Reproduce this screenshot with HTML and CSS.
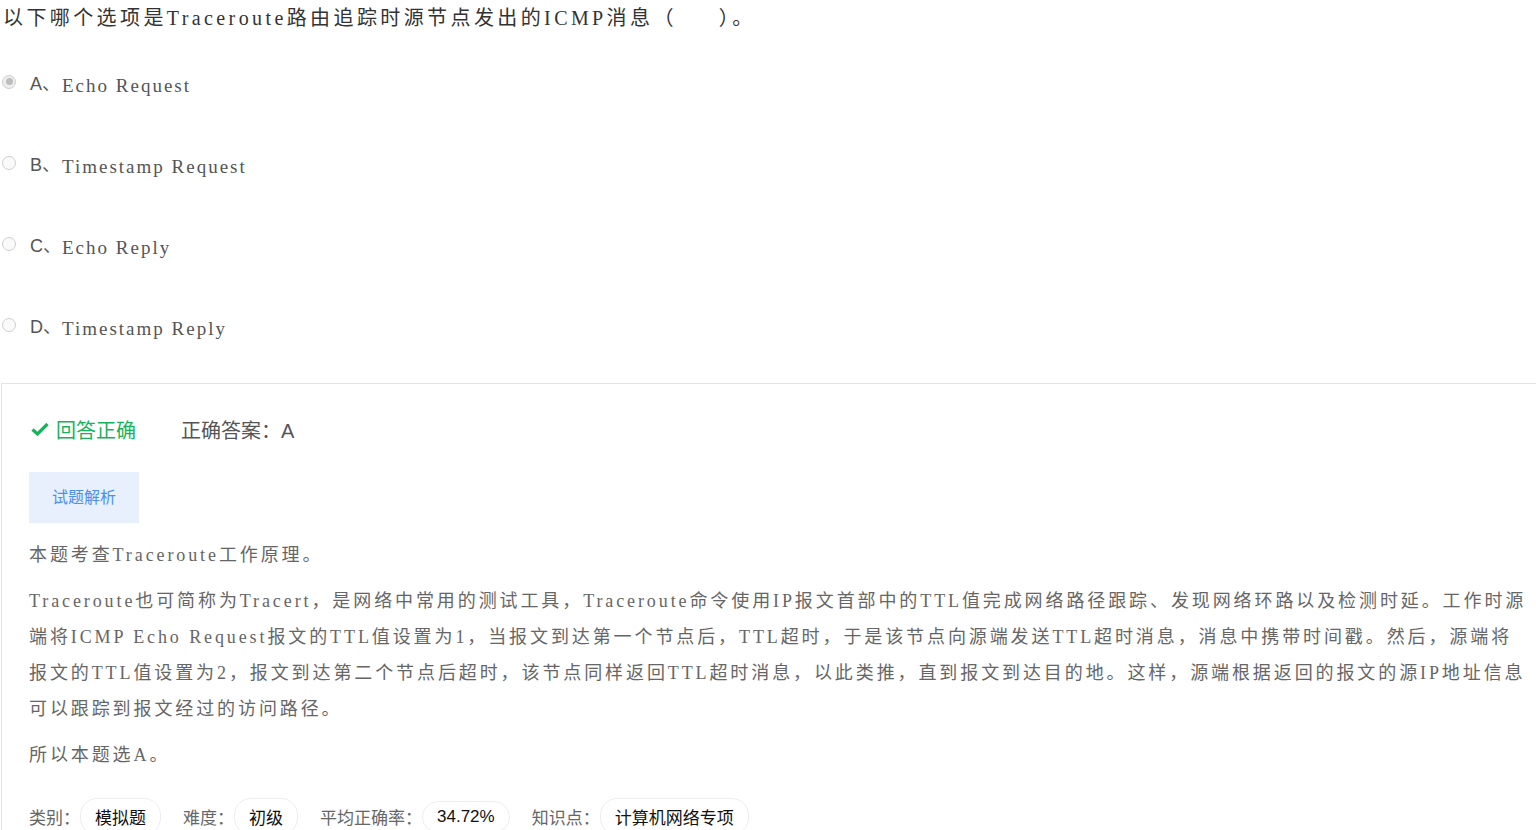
FILE: index.html
```html
<!DOCTYPE html>
<html lang="zh-CN">
<head>
    <meta charset="UTF-8">
    <title>试题</title>
    <link rel="stylesheet" href="styles.css">
</head>
<body>
    <div class="question">
        <div class="title">以下哪个选项是Traceroute路由追踪时源节点发出的ICMP消息（<span class="blank"></span>）。</div>
        <ul class="options">
            <li class="option"><span class="radio checked"></span><span class="letter">A、</span><span class="opt-text">Echo Request</span></li>
            <li class="option"><span class="radio"></span><span class="letter">B、</span><span class="opt-text">Timestamp Request</span></li>
            <li class="option"><span class="radio"></span><span class="letter">C、</span><span class="opt-text">Echo Reply</span></li>
            <li class="option"><span class="radio"></span><span class="letter">D、</span><span class="opt-text">Timestamp Reply</span></li>
        </ul>
    </div>

    <div class="answer-box">
        <div class="result-row">
            <span class="correct">
                <svg class="check" viewBox="0 0 18 14" width="18" height="14">
                    <path d="M1.5 7.5 L6.5 12 L16.5 2" fill="none" stroke="#16b45a" stroke-width="3.2" stroke-linejoin="miter"/>
                </svg>
                回答正确
            </span>
            <span class="right-answer">正确答案：A</span>
        </div>
        <div class="analysis-btn">试题解析</div>
        <div class="analysis">
            <p>本题考查Traceroute工作原理。</p>
            <p>Traceroute也可简称为Tracert，是网络中常用的测试工具，Traceroute命令使用IP报文首部中的TTL值完成网络路径跟踪、发现网络环路以及检测时延。工作时源端将ICMP Echo Request报文的TTL值设置为1，当报文到达第一个节点后，TTL超时，于是该节点向源端发送TTL超时消息，消息中携带时间戳。然后，源端将<br>报文的TTL值设置为2，报文到达第二个节点后超时，该节点同样返回TTL超时消息，以此类推，直到报文到达目的地。这样，源端根据返回的报文的源IP地址信息可以跟踪到报文经过的访问路径。</p>
            <p>所以本题选A。</p>
        </div>
        <div class="meta">
            <span class="label">类别：</span><span class="tag">模拟题</span>
            <span class="label">难度：</span><span class="tag">初级</span>
            <span class="label">平均正确率：</span><span class="tag">34.72%</span>
            <span class="label">知识点：</span><span class="tag">计算机网络专项</span>
        </div>
    </div>
</body>
</html>
```

FILE: styles.css
```css
body {
    margin: 0;
    background: #fff;
    overflow: hidden;
    font-family: "Liberation Sans", "Noto Sans CJK SC", sans-serif;
}
.question {
    padding: 0 0 0 3px;
}
.title {
    font-family: "Liberation Serif", "Noto Sans CJK SC", serif;
    font-size: 20px;
    letter-spacing: 3.4px;
    color: #333;
    line-height: 36px;
}
.blank {
    display: inline-block;
    width: 42px;
}
.options {
    list-style: none;
    margin: 0;
    padding: 0;
}
.option {
    display: flex;
    align-items: center;
    height: 81px;
}
.options .option:first-child {
    margin-top: 9px;
}
.radio {
    width: 14px;
    height: 14px;
    border: 1px solid #cfcfcf;
    border-radius: 50%;
    background: #fafafa;
    box-sizing: border-box;
    margin: -8px 14px 0 -1px;
    position: relative;
}
.radio.checked {
    background: #eee;
}
.radio.checked::after {
    content: "";
    position: absolute;
    left: 2.5px;
    top: 2.5px;
    width: 7px;
    height: 7px;
    border-radius: 50%;
    background: #bdbdbd;
}
.letter {
    font-size: 18px;
    color: #555;
    margin-top: -8px;
    width: 32px;
}
.opt-text {
    font-family: "Liberation Serif", serif;
    font-size: 19px;
    letter-spacing: 2px;
    color: #555;
}
.answer-box {
    margin-top: 14px;
    margin-left: 1px;
    border: 1px solid #e3e3e3;
    border-right: none;
    padding: 0 0 20px 27px;
}
.result-row {
    display: flex;
    align-items: center;
    height: 86px;
    padding-top: 2px;
    font-size: 20px;
}
.correct {
    color: #17b35c;
    display: flex;
    align-items: center;
    gap: 7px;
    margin-right: 45px;
}
.check {
    margin-left: 2px;
}
.right-answer {
    color: #555;
}
.analysis-btn {
    display: inline-block;
    width: 110px;
    height: 51px;
    line-height: 51px;
    text-align: center;
    background: #e8f0fd;
    color: #4b8ff0;
    font-size: 16px;
}
.analysis {
    font-family: "Liberation Serif", "Noto Sans CJK SC", serif;
    font-size: 18px;
    letter-spacing: 2.9px;
    color: #666;
    line-height: 36px;
    margin-top: 14px;
}
.analysis p {
    margin: 0 0 10px;
}
.meta {
    display: flex;
    align-items: center;
    margin-top: 25px;
    font-size: 17px;
}
.label {
    color: #666;
}
.tag {
    border: 1px solid #eee;
    border-radius: 17px;
    padding: 5px 14px;
    color: #111;
    margin-right: 22px;
}
```
